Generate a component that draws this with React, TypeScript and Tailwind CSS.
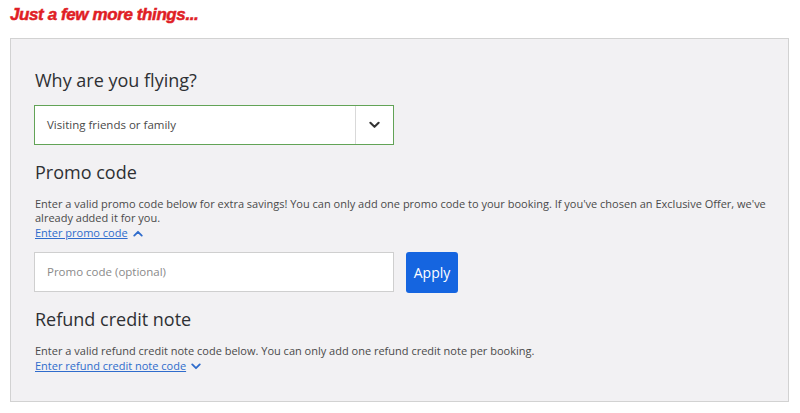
import React from "react";

function Chevron({ up = false, className = "" }: { up?: boolean; className?: string }) {
  return (
    <svg viewBox="0 0 12 8" className={className} fill="none" stroke="currentColor" strokeWidth="2.2" strokeLinecap="round" strokeLinejoin="round">
      {up ? <path d="M1.5 6.5 L6 2 L10.5 6.5" /> : <path d="M1.5 1.5 L6 6 L10.5 1.5" />}
    </svg>
  );
}

export default function App() {
  const font = { fontFamily: '"Open Sans", "Noto Sans", sans-serif' };
  return (
    <div className="w-[800px] h-[413px] bg-white overflow-hidden" style={font}>
      <div
        className="h-[38px] pl-[10px] pt-[5px] text-[17px] leading-[20px] font-bold italic text-[#e01e25] tracking-[-0.4px] [-webkit-text-stroke:0.5px_#e01e25]"
        style={{ fontFamily: '"Liberation Sans", Arial, sans-serif' }}
      >
        Just a few more things...
      </div>
      <div className="ml-[10px] w-[779px] h-[364px] border border-[#d2d2d2] bg-[#f2f1f3] px-6">
        <h2 className="pt-[29px] text-[18px] leading-[24px] text-[#2e3033]">Why are you flying?</h2>
        <div className="mt-[13px] -ml-px w-[360px] h-[40px] flex border border-[#62a356] bg-white">
          <div className="flex-1 flex items-center pl-[12px] text-[11.5px] text-[#4a4a4a]">Visiting friends or family</div>
          <div className="w-[38px] border-l border-[#d9d9d9] flex items-center justify-center text-[#333]">
            <Chevron className="w-[11px] h-[8px]" />
          </div>
        </div>
        <h2 className="mt-[15px] text-[18px] leading-[24px] text-[#2e3033]">Promo code</h2>
        <p className="mt-[13px] -mr-[10px] text-[11px] leading-[14px] text-[#4a4a4a]">
          Enter a valid promo code below for extra savings! You can only add one promo code to your booking. If you've chosen an Exclusive Offer, we've already added it for you.
        </p>
        <div className="flex items-center gap-[5px] text-[11px] leading-[16px] text-[#2f6ccc]">
          <span className="underline">Enter promo code </span>
          <Chevron up className="w-[10px] h-[7px]" />
        </div>
        <div className="mt-[11px] flex gap-[12px]">
          <div className="-ml-px w-[360px] h-[40px] border border-[#cfcfcf] bg-white flex items-center pl-[12px] text-[11.5px] text-[#8a8a8a]">
            Promo code (optional)
          </div>
          <button className="w-[52px] h-[41px] rounded-[3px] bg-[#1565e0] text-white text-[14px]">Apply</button>
        </div>
        <h2 className="mt-[14px] text-[18px] leading-[24px] text-[#2e3033]">Refund credit note</h2>
        <p className="mt-[13px] text-[11px] leading-[14px] text-[#4a4a4a]">
          Enter a valid refund credit note code below. You can only add one refund credit note per booking.
        </p>
        <div className="flex items-center gap-[5px] text-[11px] leading-[16px] text-[#2f6ccc]">
          <span className="underline">Enter refund credit note code </span>
          <Chevron className="w-[10px] h-[7px]" />
        </div>
      </div>
    </div>
  );
}
